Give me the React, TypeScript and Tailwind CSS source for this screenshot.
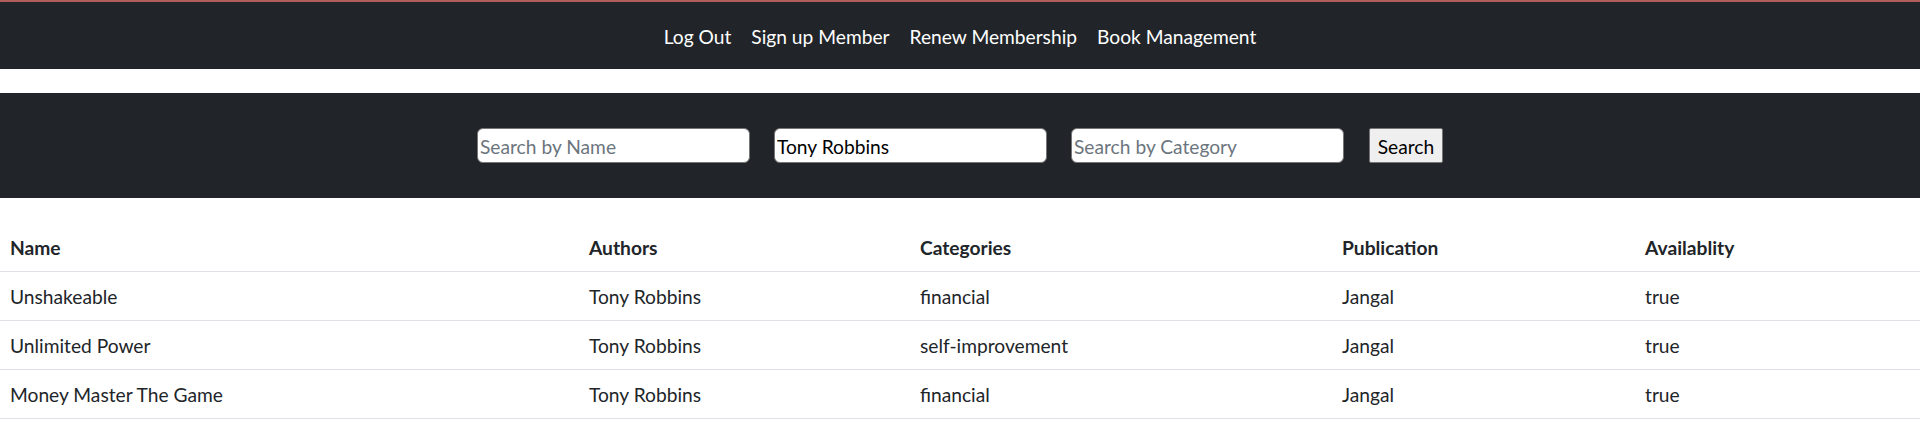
import { useState } from "react";

type Book = {
  name: string;
  authors: string;
  categories: string;
  publication: string;
  available: boolean;
};

const books: Book[] = [
  { name: "Unshakeable", authors: "Tony Robbins", categories: "financial", publication: "Jangal", available: true },
  { name: "Unlimited Power", authors: "Tony Robbins", categories: "self-improvement", publication: "Jangal", available: true },
  { name: "Money Master The Game", authors: "Tony Robbins", categories: "financial", publication: "Jangal", available: true },
];

const navLinks = ["Log Out", "Sign up Member", "Renew Membership", "Book Management"];

const App = () => {
  const [name, setName] = useState("");
  const [author, setAuthor] = useState("Tony Robbins");
  const [category, setCategory] = useState("");

  const inputClass =
    "h-[35px] w-[273px] rounded-[6px] border border-[#767676] bg-white px-[2px] pt-[2px] text-[19.2px] text-black placeholder:text-[#6c757d] outline-none";

  return (
    <div className="min-h-[442px] bg-white text-[19.2px] text-[#212529] [font-family:Lato,'Noto_Sans',sans-serif]">
      <nav className="border-t-2 border-[#b35c5c] bg-[#212529]">
        <ul className="flex h-[67px] items-center justify-center pt-[3px]">
          {navLinks.map((link) => (
            <li key={link}>
              <a className="cursor-pointer px-[10px] text-white">{link}</a>
            </li>
          ))}
        </ul>
      </nav>

      <div className="mt-[24px] flex h-[105px] items-center justify-center gap-[24px] bg-[#212529]">
        <input
          className={inputClass}
          placeholder="Search by Name"
          value={name}
          onChange={(e) => setName(e.target.value)}
        />
        <input
          className={inputClass}
          placeholder="Search by Author"
          value={author}
          onChange={(e) => setAuthor(e.target.value)}
        />
        <input
          className={inputClass}
          placeholder="Search by Category"
          value={category}
          onChange={(e) => setCategory(e.target.value)}
        />
        <button className="ml-[1px] h-[35px] w-[74px] rounded-[2px] border border-[#767676] bg-[#efefef] pt-[3px] text-[19.2px] text-black">
          Search
        </button>
      </div>

      <table className="mt-[24px] w-full border-collapse text-left">
        <thead>
          <tr className="h-[49px] border-b border-[#dee2e6]">
            <th className="w-[579px] px-[10px] pt-[4px] font-bold">Name</th>
            <th className="w-[331px] px-[10px] pt-[4px] font-bold">Authors</th>
            <th className="w-[422px] px-[10px] pt-[4px] font-bold">Categories</th>
            <th className="w-[303px] px-[10px] pt-[4px] font-bold">Publication</th>
            <th className="px-[10px] pt-[4px] font-bold">Availablity</th>
          </tr>
        </thead>
        <tbody>
          {books.map((book) => (
            <tr key={book.name} className="h-[49px] border-b border-[#dee2e6]">
              <td className="px-[10px] pt-[4px]">{book.name}</td>
              <td className="px-[10px] pt-[4px]">{book.authors}</td>
              <td className="px-[10px] pt-[4px]">{book.categories}</td>
              <td className="px-[10px] pt-[4px]">{book.publication}</td>
              <td className="px-[10px] pt-[4px]">{String(book.available)}</td>
            </tr>
          ))}
        </tbody>
      </table>
    </div>
  );
};

export default App;
